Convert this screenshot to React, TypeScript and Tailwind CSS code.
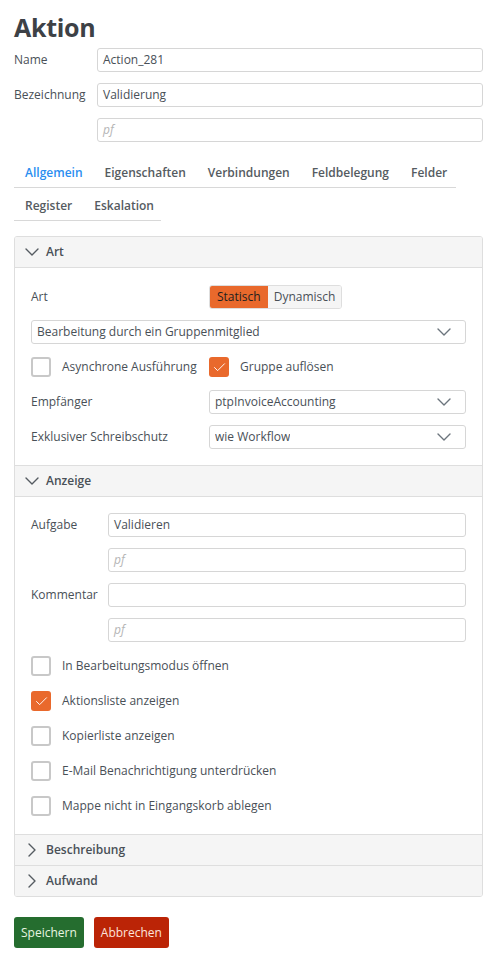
import { Check } from "lucide-react";

const inputCls =
  "h-6 w-full rounded-[3px] border border-[#d6d6d6] bg-white px-[5px] text-[12px] text-[#495057] flex items-center";

function Chevron({ dir }: { dir: "down" | "right" }) {
  return dir === "down" ? (
    <svg width="14" height="8" viewBox="0 0 14 8" fill="none" className="flex-none">
      <polyline points="1,1 7,7 13,1" stroke="currentColor" strokeWidth="1.4" strokeLinecap="round" strokeLinejoin="round" />
    </svg>
  ) : (
    <svg width="8" height="14" viewBox="0 0 8 14" fill="none" className="flex-none">
      <polyline points="1,1 7,7 1,13" stroke="currentColor" strokeWidth="1.4" strokeLinecap="round" strokeLinejoin="round" />
    </svg>
  );
}

function TextField({ value, placeholder }: { value?: string; placeholder?: string }) {
  return (
    <div className={inputCls}>
      {value ? <span>{value}</span> : placeholder ? <span className="italic text-[#b5b5b5]">{placeholder}</span> : null}
    </div>
  );
}

function SelectField({ value }: { value: string }) {
  return (
    <div className={`${inputCls} justify-between pr-[14px]`}>
      <span className="truncate">{value}</span>
      <span className="text-[#6c757d]">
        <Chevron dir="down" />
      </span>
    </div>
  );
}

function CheckBox({ checked, label }: { checked?: boolean; label: string }) {
  return (
    <div className="flex items-center gap-[11px] h-5">
      {checked ? (
        <span className="w-5 h-5 flex-none rounded-[3px] bg-[#e9692c] flex items-center justify-center">
          <Check size={15} strokeWidth={1.5} className="text-white" />
        </span>
      ) : (
        <span className="w-5 h-5 flex-none rounded-[3px] border-2 border-[#c8c8c8] bg-white" />
      )}
      <span className="text-[12px] text-[#495057] whitespace-nowrap">{label}</span>
    </div>
  );
}

function SectionHeader({ title, open }: { title: string; open?: boolean }) {
  return (
    <div className="h-[30px] bg-[#f5f5f5] flex items-center text-[12px] font-semibold text-[#495057]">
      <span className="w-[31px] flex-none flex justify-center pl-[2px] text-[#555b61]">
        <Chevron dir={open ? "down" : "right"} />
      </span>
      <span>{title}</span>
    </div>
  );
}

const tabsRow1 = ["Allgemein", "Eigenschaften", "Verbindungen", "Feldbelegung", "Felder"];
const tabsRow2 = ["Register", "Eskalation"];

export default function App() {
  return (
    <div className="min-h-[960px] bg-white pl-[14px] pr-[13px] pt-[10px] text-[12px] text-[#495057]" style={{ fontFamily: '"Open Sans", sans-serif' }}>
      <h1 className="text-[25px] font-bold leading-[34px] tracking-[-0.3px] text-[#3d4146]">Aktion</h1>

      <div className="mt-[4px] flex flex-col gap-[11px]">
        <div className="flex items-center">
          <span className="w-[83px] flex-none">Name</span>
          <TextField value="Action_281" />
        </div>
        <div className="flex items-center">
          <span className="w-[83px] flex-none">Bezeichnung</span>
          <TextField value="Validierung" />
        </div>
        <div className="flex items-center">
          <span className="w-[83px] flex-none" />
          <TextField placeholder="pf" />
        </div>
      </div>

      <div className="mt-[12px] flex flex-col items-start">
        <div className="flex w-[442px] border-b border-[#d8d8d8] font-semibold">
          {tabsRow1.map((t, i) => (
            <span key={t} className={`h-[33px] pt-[4px] flex items-center px-[11px] ${i === 0 ? "text-[#2a8ef0]" : "text-[#555b61]"}`}>
              {t}
            </span>
          ))}
        </div>
        <div className="flex w-[147px] border-b border-[#d8d8d8] font-semibold">
          {tabsRow2.map((t) => (
            <span key={t} className="h-[32px] pt-[4px] flex items-center px-[11px] text-[#555b61]">
              {t}
            </span>
          ))}
        </div>
      </div>

      <div className="mt-[15px] rounded-[3px] border border-[#dedede] overflow-hidden">
        <SectionHeader title="Art" open />
        <div className="border-t border-[#dedede] bg-white px-[16px] pt-[17px] pb-[16px] flex flex-col gap-[11px]">
          <div className="flex items-center">
            <span className="w-[178px] flex-none">Art</span>
            <div className="flex h-6 rounded-[3px] overflow-hidden border border-[#dedede]">
              <span className="bg-[#e9692c] text-[#1f1f1f] px-[7px] flex items-center">Statisch</span>
              <span className="bg-[#f5f5f5] px-[6px] flex items-center">Dynamisch</span>
            </div>
          </div>
          <SelectField value="Bearbeitung durch ein Gruppenmitglied" />
          <div className="flex items-center h-6">
            <div className="w-[178px] flex-none">
              <CheckBox label="Asynchrone Ausführung" />
            </div>
            <CheckBox checked label="Gruppe auflösen" />
          </div>
          <div className="flex items-center">
            <span className="w-[178px] flex-none">Empfänger</span>
            <SelectField value="ptpInvoiceAccounting" />
          </div>
          <div className="flex items-center">
            <span className="w-[178px] flex-none">Exklusiver Schreibschutz</span>
            <SelectField value="wie Workflow" />
          </div>
        </div>

        <div className="border-t border-[#dedede]">
          <SectionHeader title="Anzeige" open />
        </div>
        <div className="border-t border-[#dedede] bg-white px-[16px] pt-[16px] pb-[18px]">
          <div className="flex flex-col gap-[11px]">
            <div className="flex items-center">
              <span className="w-[77px] flex-none">Aufgabe</span>
              <TextField value="Validieren" />
            </div>
            <div className="flex items-center">
              <span className="w-[77px] flex-none" />
              <TextField placeholder="pf" />
            </div>
            <div className="flex items-center">
              <span className="w-[77px] flex-none">Kommentar</span>
              <TextField />
            </div>
            <div className="flex items-center">
              <span className="w-[77px] flex-none" />
              <TextField placeholder="pf" />
            </div>
          </div>
          <div className="mt-[14px] flex flex-col gap-[15px]">
            <CheckBox label="In Bearbeitungsmodus öffnen" />
            <CheckBox checked label="Aktionsliste anzeigen" />
            <CheckBox label="Kopierliste anzeigen" />
            <CheckBox label="E-Mail Benachrichtigung unterdrücken" />
            <CheckBox label="Mappe nicht in Eingangskorb ablegen" />
          </div>
        </div>

        <div className="border-t border-[#dedede]">
          <SectionHeader title="Beschreibung" />
        </div>
        <div className="border-t border-[#dedede]">
          <SectionHeader title="Aufwand" />
        </div>
      </div>

      <div className="mt-[20px] flex gap-[10px]">
        <button className="h-[31px] px-[7px] rounded-[3px] bg-[#256d2f] text-[#e8f5e0]">Speichern</button>
        <button className="h-[31px] px-[7px] rounded-[3px] bg-[#bb2406] text-[#fde3dc]">Abbrechen</button>
      </div>
    </div>
  );
}
